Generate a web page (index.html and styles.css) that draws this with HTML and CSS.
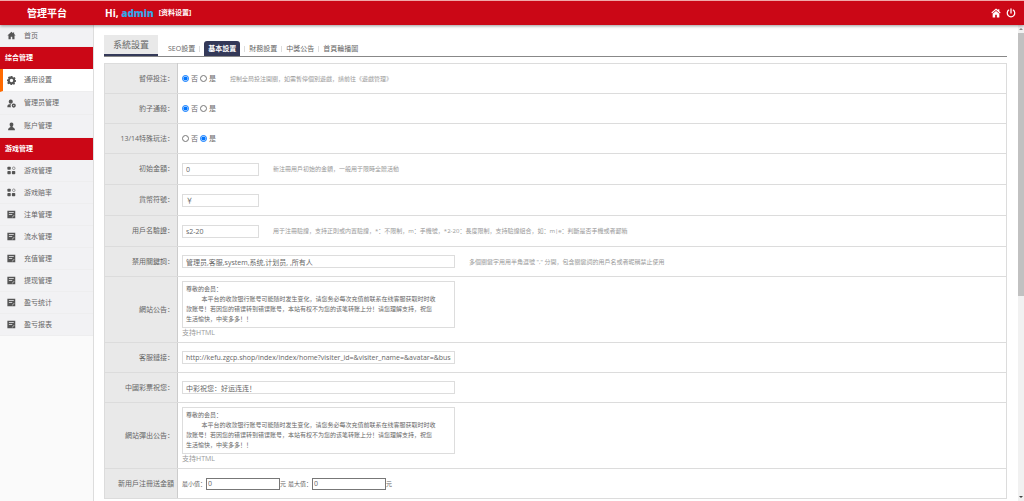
FILE: index.html
```html
<!DOCTYPE html>
<html lang="zh-CN">
<head>
    <meta charset="UTF-8">
    <meta name="viewport" content="width=device-width, initial-scale=1.0">
    <title>管理平台</title>
    <link rel="stylesheet" href="styles.css">
</head>
<body>
    <svg class="sprite" xmlns="http://www.w3.org/2000/svg">
        <symbol id="i-home" viewBox="0 0 24 24"><path d="M12 2 1 12h3v10h6v-7h4v7h6V12h3L19 8V4h-3v2z"/></symbol>
        <symbol id="i-gear" viewBox="0 0 24 24"><path fill-rule="evenodd" d="M9.500 0h5l.7 3.200 2 .9L20 2.400 23 6l-1.900 2.700.7 2 2.200.8v4l-2.800.8-1 2L21.600 21 18 23.500l-2.500-2-1.500.5-.5 2h-4L8.500 21.500l-2-1L3.500 22 .5 18.500l2-2.700-.5-1.800-2-.5v-4L3 8.700l1-2L2.400 4 6 .8 8.500 3zM12 7.500a4.500 4.500 0 1 0 0 9 4.500 4.500 0 0 0 0-9z"/></symbol>
        <symbol id="i-user" viewBox="0 0 24 24"><path d="M12 1c3.500 0 5 2.500 5 5.500 0 2.500-1 4.500-2.500 6 .5 2 6.500 3 6.500 7V22H3v-2.500c0-4 6-5 6.500-7C8 11 7 9 7 6.500 7 3.500 8.500 1 12 1z"/></symbol>
        <symbol id="i-manager" viewBox="0 0 24 24"><circle cx="10" cy="7" r="5.500"/><path d="M1 22v-3c0-4 4-6 10-6-2 3-2 6 0 9z"/><path fill-rule="evenodd" d="M18 12a5.500 5.500 0 1 1 0 11 5.500 5.500 0 0 1 0-11zm0 4a1.500 1.500 0 1 0 0 3 1.500 1.500 0 0 0 0-3z"/></symbol>
        <symbol id="i-grid" viewBox="0 0 24 24"><rect x="1" y="2" width="9" height="8" rx="2"/><circle cx="18" cy="6" r="3.500" fill="none" stroke="currentColor" stroke-width="1.500"/><rect x="1" y="13" width="9" height="9" rx="2"/><rect x="13" y="13" width="9" height="9" rx="2"/></symbol>
        <symbol id="i-list" viewBox="0 0 24 24"><path fill-rule="evenodd" d="M1 2h21v20H1zM5 6v2h13V6zm0 5v2h9v-2zm9 9 6-6-1-1-6 6v1z"/></symbol>
        <symbol id="i-power" viewBox="0 0 24 24"><path fill="none" stroke="currentColor" stroke-width="3" stroke-linecap="round" d="M12 2v10M6.500 5a9 9 0 1 0 11 0"/></symbol>
        <symbol id="i-house" viewBox="0 0 24 24"><path d="M12 1 1 11l1.500 2L12 5l9.500 8 1.500-2-3-3V3h-3v2z"/><path d="M12 7 4 14v9h6v-7h4v7h6v-9z"/></symbol>
    </svg>

    <header class="header">
        <h1 class="logo">管理平台</h1>
        <div class="hello">
            <span>Hi, <b>admin</b></span>
            <a href="#">[资料设置]</a>
        </div>
        <div class="header-tools">
            <a href="#" aria-label="首页"><svg><use href="#i-house"/></svg></a>
            <a href="#" aria-label="退出"><svg><use href="#i-power"/></svg></a>
        </div>
    </header>

    <div class="layout">
        <nav class="sidebar">
            <a href="#" class="home"><svg><use href="#i-home"/></svg>首页</a>
            <h2>综合管理</h2>
            <div class="group general">
                <a href="#" class="active"><svg><use href="#i-gear"/></svg>通用设置</a>
                <a href="#"><svg><use href="#i-manager"/></svg>管理员管理</a>
                <a href="#"><svg><use href="#i-user"/></svg>账户管理</a>
            </div>
            <h2>游戏管理</h2>
            <div class="group">
                <a href="#"><svg><use href="#i-grid"/></svg>游戏管理</a>
                <a href="#"><svg><use href="#i-grid"/></svg>游戏赔率</a>
                <a href="#"><svg><use href="#i-list"/></svg>注单管理</a>
                <a href="#"><svg><use href="#i-list"/></svg>流水管理</a>
                <a href="#"><svg><use href="#i-list"/></svg>充值管理</a>
                <a href="#"><svg><use href="#i-list"/></svg>提现管理</a>
                <a href="#"><svg><use href="#i-list"/></svg>盈亏统计</a>
                <a href="#"><svg><use href="#i-list"/></svg>盈亏报表</a>
            </div>
        </nav>

        <main class="content">
            <div class="tabs">
                <h3>系統設置</h3>
                <ul>
                    <li><a href="#">SEO設置</a></li>
                    <li><a href="#" class="current">基本設置</a></li>
                    <li><a href="#">財務設置</a></li>
                    <li><a href="#">中獎公告</a></li>
                    <li><a href="#">首頁輪播圖</a></li>
                </ul>
            </div>

            <form>
                <table class="settings">
                    <tr>
                        <th scope="row">暫停投注：</th>
                        <td>
                            <div class="field">
                                <label><input type="radio" name="pause" checked>否</label>
                                <label><input type="radio" name="pause">是</label>
                                <span class="hint">控制全局投注開關，如需暫停個別遊戲，請前往《遊戲管理》</span>
                            </div>
                        </td>
                    </tr>
                    <tr>
                        <th scope="row">豹子通殺：</th>
                        <td>
                            <div class="field">
                                <label><input type="radio" name="leopard" checked>否</label>
                                <label><input type="radio" name="leopard">是</label>
                            </div>
                        </td>
                    </tr>
                    <tr>
                        <th scope="row">13/14特殊玩法：</th>
                        <td>
                            <div class="field">
                                <label><input type="radio" name="special">否</label>
                                <label><input type="radio" name="special" checked>是</label>
                            </div>
                        </td>
                    </tr>
                    <tr class="tall">
                        <th scope="row"><label for="money">初始金額：</label></th>
                        <td>
                            <div class="field">
                                <input type="text" class="short" id="money" value="0">
                                <span class="hint">新注冊用戶初始的金額，一般用于限時全贈活動</span>
                            </div>
                        </td>
                    </tr>
                    <tr class="tall">
                        <th scope="row"><label for="currency">貨幣符號：</label></th>
                        <td>
                            <div class="field"><input type="text" class="short" id="currency" value="￥"></div>
                        </td>
                    </tr>
                    <tr class="tall">
                        <th scope="row"><label for="userrule">用戶名驗證：</label></th>
                        <td>
                            <div class="field">
                                <input type="text" class="short" id="userrule" value="s2-20">
                                <span class="hint">用于注冊驗證，支持正則或内置驗證，*：不限制，m：手機號，*2-20：長度限制，支持驗證組合，如：m|e：判斷是否手機或者郵箱</span>
                            </div>
                        </td>
                    </tr>
                    <tr>
                        <th scope="row"><label for="banned">禁用關鍵詞：</label></th>
                        <td>
                            <div class="field">
                                <input type="text" class="long" id="banned" value="管理员,客服,system,系统,计划员, ,所有人">
                                <span class="hint">多個關鍵字用用半角逗號 "," 分開，包含關鍵詞的用戶名或者昵稱禁止使用</span>
                            </div>
                        </td>
                    </tr>
                    <tr>
                        <th scope="row"><label for="notice">網站公告：</label></th>
                        <td class="notice">
                            <textarea id="notice">尊敬的会员：
          本平台的收款银行账号可能随时发生变化，请您务必每次充值前联系在线客服获取时时收
款账号！若因您的错误转到错误账号，本站有权不为您的该笔转账上分！请您理解支持，祝您
生活愉快，中奖多多！！</textarea>
                            <p>支持HTML</p>
                        </td>
                    </tr>
                    <tr>
                        <th scope="row"><label for="service">客服鏈接：</label></th>
                        <td>
                            <div class="field"><input type="text" class="long" id="service" value="http://kefu.zgcp.shop/index/index/home?visiter_id=&amp;visiter_name=&amp;avatar=&amp;business_id=1"></div>
                        </td>
                    </tr>
                    <tr>
                        <th scope="row"><label for="wish">中國彩票祝您：</label></th>
                        <td>
                            <div class="field"><input type="text" class="long" id="wish" value="中彩祝您：好运连连！"></div>
                        </td>
                    </tr>
                    <tr>
                        <th scope="row"><label for="popup">網站彈出公告：</label></th>
                        <td class="notice">
                            <textarea id="popup">尊敬的会员：
          本平台的收款银行账号可能随时发生变化，请您务必每次充值前联系在线客服获取时时收
款账号！若因您的错误转到错误账号，本站有权不为您的该笔转账上分！请您理解支持，祝您
生活愉快，中奖多多！！</textarea>
                            <p>支持HTML</p>
                        </td>
                    </tr>
                    <tr>
                        <th scope="row">新用戶注冊送金額</th>
                        <td>
                            <div class="field range">
                                <label for="min">最小值：</label><input type="text" id="min" value="0"><span>元</span>
                                <label for="max">最大值：</label><input type="text" id="max" value="0"><span>元</span>
                            </div>
                        </td>
                    </tr>
                </table>
            </form>
        </main>

        <div class="scrollbar">
            <span class="arrow up"></span>
            <span class="thumb"></span>
            <span class="arrow down"></span>
        </div>
    </div>
</body>
</html>
```

FILE: styles.css
```css
* {
    margin: 0;
    padding: 0;
    box-sizing: border-box;
}

body {
    height: 100vh;
    display: flex;
    flex-direction: column;
    overflow: hidden;
    background: #fff;
    color: #666;
    font-family: "Open Sans", "Noto Sans CJK SC", sans-serif;
    font-size: 7px;
    line-height: 10px;
}

a {
    color: inherit;
    text-decoration: none;
}

input,
textarea {
    font-family: inherit;
    color: inherit;
}

.sprite {
    display: none;
}

svg {
    fill: currentColor;
}

/* header */
.header {
    display: flex;
    align-items: center;
    flex-shrink: 0;
    height: 25px;
    background: #cb0716;
    border-top: 1px solid #f0a8a8;
    box-shadow: 0 1px 3px rgba(0, 0, 0, 0.4);
    color: #fff;
    z-index: 1;
}

.logo {
    width: 94px;
    font-size: 10px;
    text-align: center;
}

.hello {
    flex: 1;
    display: flex;
    align-items: center;
    gap: 5px;
    padding-left: 11px;
    font-size: 10px;
    font-weight: bold;
}

.hello b {
    color: #35a5e8;
}

.hello a {
    font-size: 7px;
}

.header-tools {
    display: flex;
    gap: 5px;
    padding-right: 8px;
}

.header-tools svg {
    display: block;
    width: 10px;
    height: 10px;
}

.layout {
    flex: 1;
    min-height: 0;
    display: flex;
}

/* sidebar */
.sidebar {
    flex: 0 0 94px;
    border-right: 1px solid #ddd;
    background: #fafafa;
}

.sidebar a {
    display: flex;
    align-items: center;
    gap: 8px;
    height: 22px;
    padding-left: 7px;
    border-bottom: 1px solid #eeeeef;
    background: #f2f2f4;
}

.sidebar .general a {
    height: 23px;
}

.sidebar svg {
    width: 9px;
    height: 9px;
    color: #555;
}

.sidebar a.active {
    padding-left: 4px;
    border-left: 3px solid #ff6a00;
    background: #fff;
}

.sidebar h2 {
    height: 22px;
    padding-left: 5px;
    background: #cb0716;
    color: #fff;
    font-size: 7px;
    line-height: 22px;
}

/* content */
.content {
    flex: 1;
    min-width: 0;
    padding: 10px 11px 0 10px;
    overflow: hidden;
}

.tabs {
    display: flex;
    align-items: flex-end;
    height: 22px;
    border-bottom: 1px solid #888;
}

.tabs h3 {
    height: 21px;
    padding: 0 9px;
    border-bottom: 2px solid #343958;
    background: #e9e9e9;
    font-size: 9px;
    font-weight: normal;
    line-height: 20px;
}

.tabs ul {
    display: flex;
    align-items: center;
    padding-left: 6px;
    list-style: none;
}

.tabs li {
    display: flex;
    align-items: center;
}

.tabs li + li::before {
    content: "";
    width: 1px;
    height: 6px;
    background: #ddd;
}

.tabs li a {
    padding: 0 4px;
    line-height: 15px;
}

.tabs a.current {
    margin: 0 4px;
    border-radius: 3px 3px 0 0;
    background: #343958;
    color: #fff;
    font-weight: bold;
}

.settings {
    width: 100%;
    margin-top: 6px;
    border-collapse: collapse;
    border: 1px solid #dcdcdc;
}

.settings tr {
    height: 30px;
}

.settings tr.tall {
    height: 31px;
}

.settings th,
.settings td {
    border-bottom: 1px solid #dcdcdc;
    vertical-align: middle;
}

.settings th {
    width: 73px;
    padding-right: 3px;
    border-right: 1px solid #ccc;
    background: #e9e9e9;
    font-weight: normal;
    text-align: right;
    white-space: nowrap;
}

.settings td {
    padding-left: 4px;
}

.field {
    display: flex;
    align-items: center;
    gap: 2px;
}

.field label {
    display: flex;
    align-items: center;
    gap: 2px;
}

.field input[type="radio"] {
    width: 7px;
    height: 7px;
}

.hint {
    padding-left: 12px;
    color: #999;
    font-size: 6px;
    white-space: nowrap;
}

input[type="text"],
textarea {
    border: 1px solid #ddd;
    background: #fff;
    outline: none;
}

input[type="text"] {
    height: 13px;
    padding: 0 3px;
    font-size: 7px;
}

.short {
    width: 77px;
}

.long,
textarea {
    width: 273px;
}

.settings .notice {
    padding: 4px;
}

textarea {
    display: block;
    height: 47px;
    padding: 2px 3px;
    font-size: 6px;
    line-height: 10px;
    resize: none;
    overflow: hidden;
}

.notice p {
    color: #999;
}

.range {
    gap: 0;
    font-size: 6px;
}

.range span + label {
    padding-left: 2px;
}

.range input[type="text"] {
    width: 74px;
    height: 12px;
    padding: 0 1px;
    border-color: #777;
}

/* scrollbar */
.scrollbar {
    flex: 0 0 6px;
    display: flex;
    flex-direction: column;
    align-items: center;
    padding: 3px 0;
    background: #f1f1f1;
}

.thumb {
    width: 100%;
    height: 56%;
    margin-top: 3px;
    background: #c1c1c1;
}

.arrow {
    border: 2px solid transparent;
}

.arrow.up {
    border-top: 0;
    border-bottom-color: #888;
}

.arrow.down {
    margin-top: auto;
    border-bottom: 0;
    border-top-color: #444;
}
```
